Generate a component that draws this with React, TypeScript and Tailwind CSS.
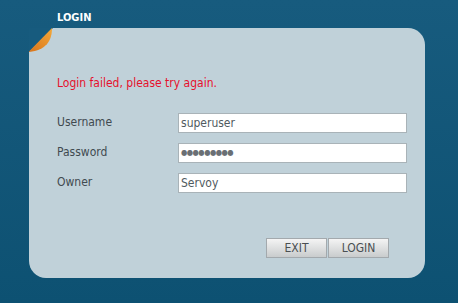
export default function App() {
  const font = { fontFamily: '"DejaVu Sans Condensed", "DejaVu Sans", Tahoma, sans-serif' };
  const rows = [
    { label: "Username", value: "superuser" },
    { label: "Password", value: "●●●●●●●●●", secret: true },
    { label: "Owner", value: "Servoy" },
  ];

  return (
    <div
      className="w-[458px] h-[303px] overflow-hidden bg-gradient-to-b from-[#175b7e] to-[#0d5172] text-[12px]"
      style={font}
    >
      <div className="pl-[57px] pt-[11px] h-[28px] text-[11px] font-bold text-white leading-[14px]">LOGIN</div>

      <div className="relative ml-[29px] w-[396px] h-[250px] bg-[#c0d1d9] rounded-tr-[17px] rounded-br-[17px] rounded-bl-[17px] pl-[28px] pr-[18px] pt-[47px]">
        {/* curled corner */}
        <svg className="absolute left-0 top-0" width="24" height="25" viewBox="0 0 24 25">
          <defs>
            <linearGradient id="curl" x1="1" y1="0" x2="0" y2="1">
              <stop offset="0" stopColor="#f3a83a" />
              <stop offset="1" stopColor="#d8741a" />
            </linearGradient>
          </defs>
          <polygon points="0,0 24,0 0,24" fill="#175b7e" />
          <path d="M23,0 C23,13 17,22 0,24 L0,23.5 L23,0 Z" fill="url(#curl)" />
        </svg>

        <div className="text-[#e6102c] leading-[16px]">Login failed, please try again.</div>

        <div className="mt-[22px] flex flex-col gap-[10px]">
          {rows.map((r) => (
            <div key={r.label} className="flex items-start h-[20px]">
              <span className="w-[121px] text-[#404a50] leading-[16px] mt-[1px]">{r.label}</span>
              <div className="w-[229px] h-[20px] bg-white border border-[#a9b3b8] pl-[2px] flex items-center text-[#505a60]">
                {r.secret ? (
                  <span className="text-[8px] tracking-[-0.5px] text-[#6a6f74]">{r.value}</span>
                ) : (
                  r.value
                )}
              </div>
            </div>
          ))}
        </div>

        <div className="mt-[45px] flex justify-end gap-[1px] pr-[18px]">
          <button className="w-[61px] h-[20px] border border-[#a3a9ad] bg-gradient-to-b from-[#f4f4f4] to-[#c9cccd] text-[#4a4f52] text-[12px] leading-none">
            EXIT
          </button>
          <button className="w-[61px] h-[20px] border border-[#a3a9ad] bg-gradient-to-b from-[#f4f4f4] to-[#c9cccd] text-[#4a4f52] text-[12px] leading-none">
            LOGIN
          </button>
        </div>
      </div>
    </div>
  );
}
